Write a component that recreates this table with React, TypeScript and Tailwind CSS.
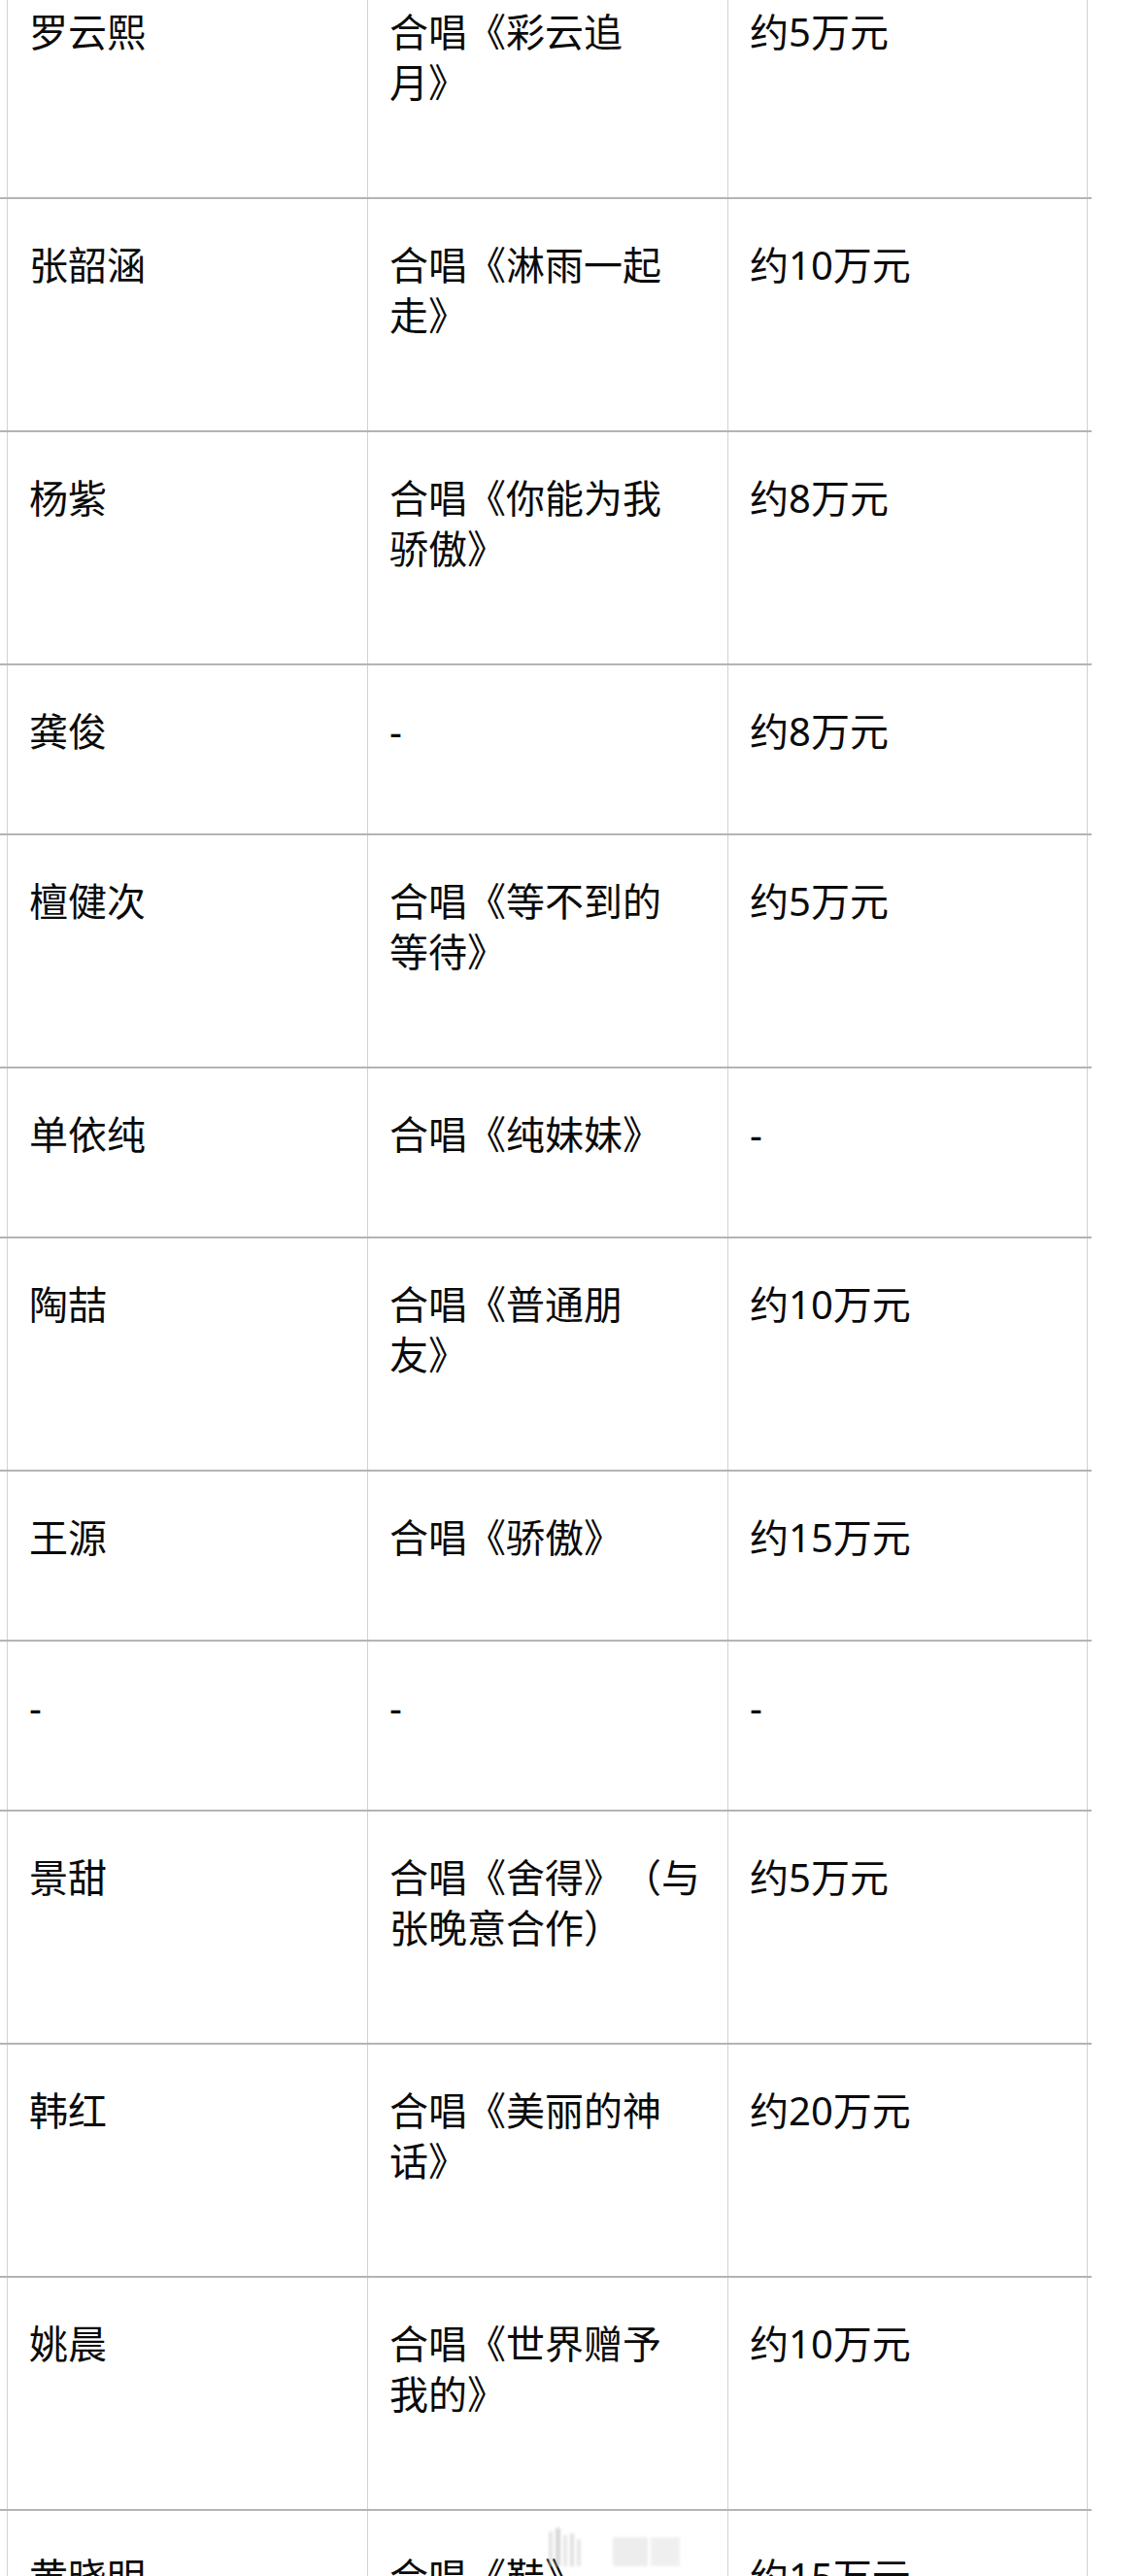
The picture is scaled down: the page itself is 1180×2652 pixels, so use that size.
import React from 'react';

type Row = {
  name: string;
  song: string[];
  fee: string;
  tall: boolean;
};

// line breaks follow the screenshot's wrapping
const rows: Row[] = [
  { name: '罗云熙', song: ['合唱《彩云追', '月》'], fee: '约5万元', tall: true },
  { name: '张韶涵', song: ['合唱《淋雨一起', '走》'], fee: '约10万元', tall: true },
  { name: '杨紫', song: ['合唱《你能为我', '骄傲》'], fee: '约8万元', tall: true },
  { name: '龚俊', song: ['-'], fee: '约8万元', tall: false },
  { name: '檀健次', song: ['合唱《等不到的', '等待》'], fee: '约5万元', tall: true },
  { name: '单依纯', song: ['合唱《纯妹妹》'], fee: '-', tall: false },
  { name: '陶喆', song: ['合唱《普通朋', '友》'], fee: '约10万元', tall: true },
  { name: '王源', song: ['合唱《骄傲》'], fee: '约15万元', tall: false },
  { name: '-', song: ['-'], fee: '-', tall: false },
  { name: '景甜', song: ['合唱《舍得》（与', '张晚意合作）'], fee: '约5万元', tall: true },
  { name: '韩红', song: ['合唱《美丽的神', '话》'], fee: '约20万元', tall: true },
  { name: '姚晨', song: ['合唱《世界赠予', '我的》'], fee: '约10万元', tall: true },
  { name: '黄晓明', song: ['合唱《鞋》'], fee: '约15万元', tall: true },
];

function Cell({ children, last }: { children: React.ReactNode; last?: boolean }) {
  return (
    <div
      className={`w-[371px] shrink-0 border-l-[1.5px] border-[#d2d2d2] pl-[22px] pt-[42px] whitespace-nowrap [text-spacing-trim:space-all] ${
        last ? 'border-r-[1.5px]' : ''
      }`}
    >
      {children}
    </div>
  );
}

export default function App() {
  return (
    <div
      className="relative h-[2652px] w-[1180px] overflow-hidden bg-white text-[40px] leading-[52px] text-[#0a0a0a]"
      style={{ fontFamily: '"Noto Sans", "Noto Sans CJK SC", sans-serif' }}
    >
      <div className="mt-[-35px] w-[1124px]">
        {rows.map((r, i) => (
          <div
            key={i}
            className={`flex border-b-2 border-[#b4b4b4] ${r.tall ? 'h-[240px]' : 'h-[175px]'}`}
          >
            <div className="w-[7px] shrink-0" />
            <Cell>{r.name}</Cell>
            <Cell>
              {r.song.map((line, j) => (
                <div key={j}>{line}</div>
              ))}
            </Cell>
            <Cell last>{r.fee}</Cell>
          </div>
        ))}
      </div>

      {/* faint watermark over the last row */}
      <div className="absolute left-[565px] top-[2602px] flex h-[40px] w-[190px] items-end gap-[3px] opacity-60 blur-[1.5px]">
        <div className="h-[36px] w-[4px] rounded-t-full bg-[#cfcfcf]" />
        <div className="h-[40px] w-[5px] rounded-t-full bg-[#bdbdbd]" />
        <div className="h-[32px] w-[4px] bg-[#d6d6d6]" />
        <div className="h-[34px] w-[4px] bg-[#cacaca]" />
        <div className="h-[28px] w-[4px] bg-[#d6d6d6]" />
        <div className="ml-[30px] h-[30px] w-[36px] bg-[#e2e2e2]" />
        <div className="h-[30px] w-[30px] bg-[#e6e6e6]" />
      </div>
    </div>
  );
}
